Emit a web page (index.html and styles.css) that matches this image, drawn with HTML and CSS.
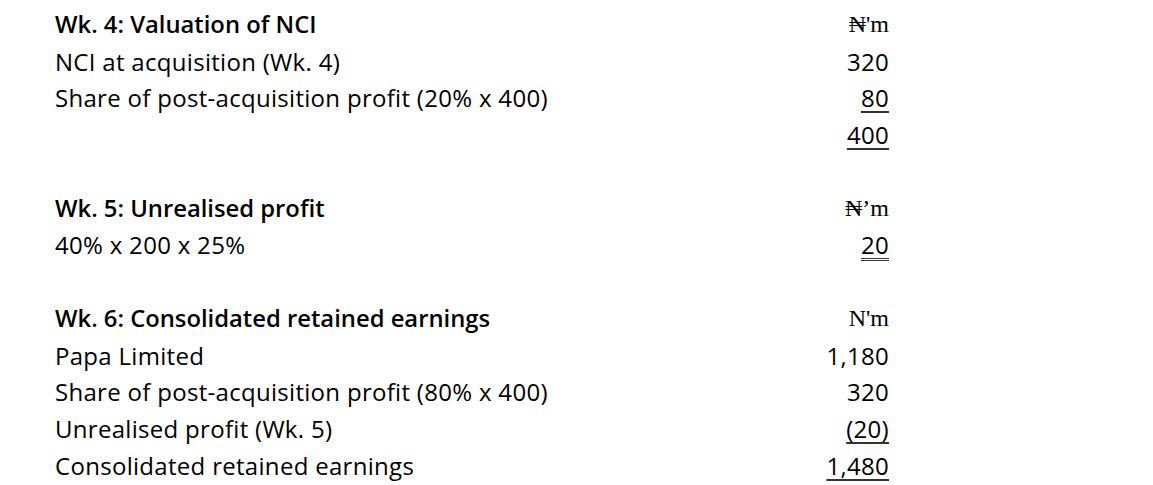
FILE: index.html
```html
<!DOCTYPE html>
<html>
<head>
<meta charset="utf-8">
<link rel="stylesheet" href="styles.css">
</head>
<body>
<div class="sheet">
  <div class="row head"><span class="label">Wk. 4: Valuation of NCI</span><span class="amt unit">₦'m</span></div>
  <div class="row"><span class="label">NCI at acquisition (Wk. 4)</span><span class="amt">320</span></div>
  <div class="row"><span class="label">Share of post-acquisition profit (20% x 400)</span><span class="amt"><span class="ul">80</span></span></div>
  <div class="row"><span class="label"></span><span class="amt"><span class="ul">400</span></span></div>
  <div class="row blank"></div>
  <div class="row head"><span class="label">Wk. 5: Unrealised profit</span><span class="amt unit">₦’m</span></div>
  <div class="row"><span class="label">40% x 200 x 25%</span><span class="amt"><span class="dul">20</span></span></div>
  <div class="row blank"></div>
  <div class="row head"><span class="label">Wk. 6: Consolidated retained earnings</span><span class="amt unit">N'm</span></div>
  <div class="row"><span class="label">Papa Limited</span><span class="amt">1,180</span></div>
  <div class="row"><span class="label">Share of post-acquisition profit (80% x 400)</span><span class="amt">320</span></div>
  <div class="row"><span class="label">Unrealised profit (Wk. 5)</span><span class="amt"><span class="ul">(20)</span></span></div>
  <div class="row"><span class="label">Consolidated retained earnings</span><span class="amt"><span class="ul">1,480</span></span></div>
</div>
</body>
</html>
```
FILE: styles.css
```css
html, body {
  margin: 0;
  padding: 0;
  background: #ffffff;
}
body {
  font-family: "Open Sans", Lato, sans-serif;
  color: #000000;
}
.sheet {
  width: 834px;
  padding: 6px 0 0 55px;
}
.row {
  display: flex;
  justify-content: space-between;
  align-items: center;
  height: 36.75px;
  font-size: 24px;
  letter-spacing: 0.3px;
}
.head .label {
  font-weight: 600;
  font-size: 23.8px;
  letter-spacing: 0;
}
.amt {
  text-align: right;
}
.unit {
  font-family: "Liberation Serif", "DejaVu Serif", serif;
  font-size: 24px;
  letter-spacing: 0;
}
.ul {
  text-decoration: underline;
  text-decoration-thickness: 2px;
  text-underline-offset: 4px;
  text-decoration-color: #333;
}
.dul {
  text-decoration: underline double;
  text-decoration-thickness: 1px;
  text-underline-offset: 4px;
  text-decoration-color: #333;
}
```
